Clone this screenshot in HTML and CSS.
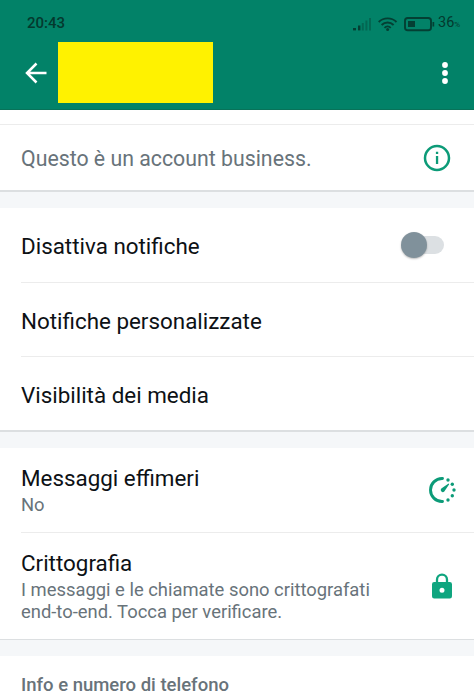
FILE: index.html
```html
<!DOCTYPE html>
<html lang="it">
<head>
<meta charset="utf-8">
<title>Info contatto</title>
<link rel="stylesheet" href="styles.css">
</head>
<body>
<header class="header">
  <div class="status">
    <span class="clock">20:43</span>
    <svg class="status-icons" width="86" height="20" viewBox="352 12 86 20">
      <g fill="#043f33">
        <path d="M353 27h3v2.400h-3z"/>
        <path d="M358 24.500h2.400v4.900H358z"/>
        <g opacity=".4"><path d="M361.800 22h2v7.400h-2zM365.400 19.500h2v9.900h-2zM369 17h2v12.400h-2z"/></g>
      </g>
      <g fill="none" stroke="#043f33" stroke-width="1.900">
        <path d="M378.700 21a12.800 12.800 0 0 1 17.800 0M381.600 24a8.600 8.600 0 0 1 12 0M384.500 26.800a4.400 4.400 0 0 1 6.200 0"/>
        <rect x="405" y="17" width="26" height="12.200" rx="2.800"/>
      </g>
      <circle cx="387.600" cy="28.600" r="1.500" fill="#043f33"/>
      <path d="M408 20h7v6h-7zM432.500 21h1.700v4.500h-1.700z" fill="#043f33"/>
    </svg>
    <span class="battery">36<small>%</small></span>
  </div>
  <div class="toolbar">
    <svg class="back" width="22" height="22" viewBox="0 0 22 22"><path d="M21.500 11H2M11.500 1.500L2 11l9.500 9.500" fill="none" stroke="#fff" stroke-width="2.500"/></svg>
    <div class="name"></div>
    <svg class="more" width="6" height="22" viewBox="0 0 6 22" fill="#fff"><circle cx="3" cy="3" r="2.900"/><circle cx="3" cy="11" r="2.900"/><circle cx="3" cy="19" r="2.900"/></svg>
  </div>
</header>
<main>
  <section class="strip"></section>
  <section class="card business">
    <p class="notice">Questo è un account business.</p>
    <svg width="28" height="28" viewBox="0 0 28 28"><circle cx="14" cy="14" r="12" fill="none" stroke="#0c9b78" stroke-width="2.500"/><path d="M12.900 12h2.300v8h-2.300zM12.900 7.800h2.300v2.300h-2.300z" fill="#0c9b78"/></svg>
  </section>
  <section class="card">
    <div class="row"><span class="title">Disattiva notifiche</span><span class="switch"></span></div>
    <div class="row"><span class="title">Notifiche personalizzate</span></div>
    <div class="row"><span class="title">Visibilità dei media</span></div>
  </section>
  <section class="card security">
    <div class="row ephemeral">
      <div><div class="title">Messaggi effimeri</div><div class="detail">No</div></div>
      <svg width="28" height="28" viewBox="0 0 28 28"><path d="M14.500 2.500H14a11.500 11.500 0 0 0 0 23h.500" fill="none" stroke="#0c9b78" stroke-width="2.900" stroke-linecap="round"/><g fill="#0c9b78"><circle cx="20" cy="4" r="1.700"/><circle cx="24.300" cy="8.200" r="1.700"/><circle cx="26" cy="14" r="1.700"/><circle cx="24.300" cy="19.800" r="1.700"/><circle cx="20" cy="24" r="1.700"/><path d="M20.600 7.500l.6.700-4.900 7.200a2 2 0 0 1-3-2.800z"/></g></svg>
    </div>
    <div class="row encryption">
      <div><div class="title">Crittografia</div><div class="detail">I messaggi e le chiamate sono crittografati<br>end-to-end. Tocca per verificare.</div></div>
      <svg width="20" height="26" viewBox="0 0 20 26"><path d="M5 10V6.700a5 5 0 0 1 10 0V10" fill="none" stroke="#0fa57f" stroke-width="2.300"/><path fill-rule="evenodd" fill="#0fa57f" d="M2.200 9h15.600Q20 9 20 11.200v12Q20 25.400 17.800 25.400H2.200Q0 25.400 0 23.200v-12Q0 9 2.200 9zM10 14.700a2.500 2.500 0 1 0 0 5 2.500 2.500 0 0 0 0-5z"/></svg>
    </div>
  </section>
  <section class="card phone"><h2>Info e numero di telefono</h2></section>
</main>
</body>
</html>
```
FILE: styles.css
```css
* { box-sizing: border-box; }
body { margin: 0; background: #f5f7f9; font-family: Roboto, "Liberation Sans", sans-serif; color: #0d1115; height: 700px; overflow: hidden; }
p, h2 { margin: 0; }
svg { display: block; flex: none; }
.header { height: 110px; background: #028268; border-bottom: 1px solid #087259; }
.status { height: 42px; display: flex; align-items: center; padding: 3px 12px 0 27px; color: #04392e; }
.clock { font-size: 15px; font-weight: 500; line-height: 20px; }
.status-icons { margin-left: auto; }
.battery { font-size: 14.500px; line-height: 20px; width: 24px; white-space: nowrap; padding-top: 3px; }
.battery small { font-size: 8px; }
.toolbar { height: 61px; display: flex; align-items: center; padding: 0 26px 0 25px; }
.name { width: 155px; height: 61px; margin-left: 11px; background: #fff200; }
.more { margin-left: auto; }
.strip { height: 14px; background: #fff; }
.card { background: #fff; margin-bottom: 16px; border-bottom: 2px solid #dcdfe1; }
.business { height: 68px; border-top: 1px solid #ececec; display: flex; align-items: center; justify-content: space-between; padding: 0 23px 0 21px; }
.notice { font-size: 21.300px; color: #68737a; line-height: 28px; padding-top: 2px; }
.row { height: 74px; margin-left: 21px; padding-right: 30px; display: flex; align-items: center; justify-content: space-between; }
.row + .row { border-top: 1px solid #ececec; }
.title { font-size: 22.400px; line-height: 28px; padding-top: 2px; }
.detail { font-size: 18.400px; line-height: 22px; color: #68737a; }
.security { border-bottom-width: 1px; }
.security .title { padding: 0; height: 29px; line-height: 27px; }
.ephemeral { height: 84px; padding-right: 18px; }
.encryption { height: 107px; padding-right: 22px; }
.phone { height: 60px; padding: 17px 21px; margin: 0; }
.phone h2 { font-size: 18.500px; line-height: 24px; font-weight: 500; color: #68737a; }
.switch { width: 43px; height: 26px; position: relative; }
.switch::before { content: ""; position: absolute; right: 0; top: 4px; width: 34px; height: 18px; border-radius: 9px; background: #dce0e3; }
.switch::after { content: ""; position: absolute; left: 0; top: 0; width: 26px; height: 26px; border-radius: 50%; background: #80919b; box-shadow: 0 1px 2px #0004; }
```
